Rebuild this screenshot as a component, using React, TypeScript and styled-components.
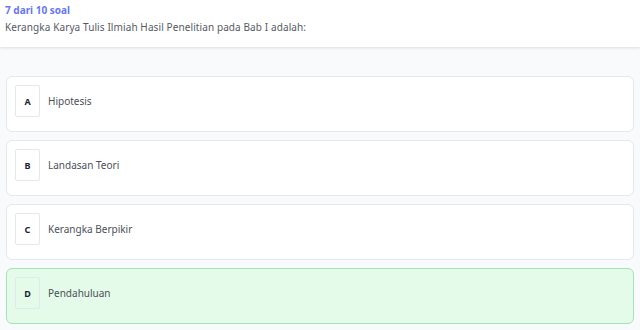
import React from 'react'
import styled, { createGlobalStyle } from 'styled-components'

const GlobalStyle = createGlobalStyle`
  html, body {
    margin: 0;
    padding: 0;
    background: #f9fafb;
    font-family: "Noto Sans", "Liberation Sans", sans-serif;
  }
`

const Page = styled.div`
  width: 640px;
  height: 330px;
  background: #f9fafb;
  overflow: hidden;
`

const Header = styled.div`
  height: 47px;
  box-sizing: border-box;
  padding: 3px 5px 0;
  background: #ffffff;
  box-shadow: 0 1px 3px rgba(0, 0, 0, 0.12);
  display: flex;
  flex-direction: column;
  gap: 3px;
`

const Counter = styled.div`
  font-size: 10px;
  font-weight: 700;
  color: #6677f5;
  line-height: 14px;
`

const Question = styled.div`
  font-size: 10px;
  color: #555a63;
  line-height: 14px;
  letter-spacing: 0.1px;
`

const Options = styled.div`
  padding: 29px 6px 0;
  display: flex;
  flex-direction: column;
  gap: 8px;
`

const Card = styled.div<{ $selected?: boolean }>`
  height: 56px;
  box-sizing: border-box;
  padding: 8px 8px 0;
  border-radius: 6px;
  border: 1px solid ${({ $selected }) => ($selected ? '#a6e2b8' : '#e3e7ee')};
  background: ${({ $selected }) => ($selected ? '#e5fbea' : '#ffffff')};
  display: flex;
  align-items: flex-start;
  gap: 8px;
`

const Letter = styled.div`
  width: 25px;
  height: 32px;
  box-sizing: border-box;
  border: 1px solid #e3e7ee;
  border-radius: 2px;
  display: flex;
  align-items: center;
  justify-content: center;
  font-size: 9px;
  font-weight: 700;
  color: #1f2330;
`

const Label = styled.div`
  font-size: 10px;
  color: #4b5058;
  line-height: 32px;
`

const options = [
  { key: 'A', text: 'Hipotesis' },
  { key: 'B', text: 'Landasan Teori' },
  { key: 'C', text: 'Kerangka Berpikir' },
  { key: 'D', text: 'Pendahuluan', selected: true },
]

export default function App() {
  return (
    <Page>
      <GlobalStyle />
      <Header>
        <Counter>7 dari 10 soal</Counter>
        <Question>Kerangka Karya Tulis Ilmiah Hasil Penelitian pada Bab I adalah:</Question>
      </Header>
      <Options>
        {options.map((o) => (
          <Card key={o.key} $selected={o.selected}>
            <Letter>{o.key}</Letter>
            <Label>{o.text}</Label>
          </Card>
        ))}
      </Options>
    </Page>
  )
}
